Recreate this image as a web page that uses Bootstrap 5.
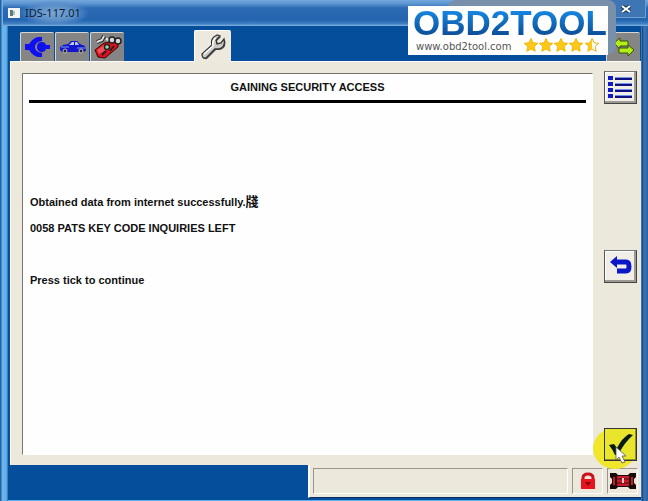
<!DOCTYPE html>
<html lang="en">
<head>
<meta charset="utf-8">
<meta name="viewport" content="width=device-width, initial-scale=1">
<title>IDS-117.01</title>
<link href="https://cdn.jsdelivr.net/npm/bootstrap@5.3.0/dist/css/bootstrap.min.css" rel="stylesheet">
<style>
body{font-family:"Liberation Sans",Arial,sans-serif;font-size:11px;line-height:26px;color:#111;background:#3c78b8}
.app-window{min-height:100vh;padding:0 7px 1px 8px;overflow:hidden;
 background:linear-gradient(90deg,#2a5f9d 0,#2a5f9d 1px,#68b4ee 2px,#62b6f0 6px,#3a6fa8 8px,transparent 8px,transparent calc(100% - 7px),#143f78 calc(100% - 6px),#3c74b4 calc(100% - 4px),#2a62a4 100%),#5cb0ec}
.title-bar{height:26px;margin-left:-5px;margin-right:-7px;padding-left:5px;background:linear-gradient(180deg,#74a8dc 0,#5a93cf 4px,#2c6ab4 8px,#2465b0 20px,#4482c4 24px,#86b8e6 26px)}
.title-text{font-family:"Noto Sans","Open Sans",sans-serif;font-size:11px;color:#0c1c38;padding:0 8px 0 5px;background:radial-gradient(closest-side,#7aa6d4,#5a8fc8 60%,transparent)}
.btn-close-win{width:40px;height:18px;margin-right:2px;border:1px solid #6f9fcf;border-top:0;background:#3d75b5;color:#fff}
.client{background:#044e9b}
.tab-strip{height:35px;padding:0 1px 0 12px}
.tool-tab{width:34px;height:29px;padding:0;margin-right:1px;border:0;border-top:1px solid #d5d5d5;border-left:1px solid #d5d5d5;border-radius:2px 2px 0 0;background:#858585;line-height:0}
.tool-tab.current{width:37px;height:32px;margin-left:69px;margin-bottom:-1px;background:#ede9df;border-color:#fff;position:relative}
.tool-tab.switch{margin:0 0 0 auto}
.panel{margin-left:2px;background:#ece8dc;border-top:1px solid #fff;border-left:1px solid #fff}
.message{margin:11px 11px 10px;background:#fefefe;border:1px solid #fff;border-top-color:#77756f;border-left-color:#77756f;padding:0 6px;font-weight:700}
.message h1{font-size:11px;font-weight:700;line-height:26px;margin:0;border-bottom:3px solid #000}
.message-body{padding:86px 0 0 1px}
.message-body p{margin:0}
.cjk{font-family:"Noto Sans CJK TC","Noto Sans CJK SC",sans-serif;font-size:13px;line-height:1}
.side{margin:9px 4px 4px 0}
.side-btn{width:33px;height:33px;padding:0;line-height:0;background:#f1eee7;border:1px solid #444;border-top-color:#777;border-left-color:#555;box-shadow:inset -2px -2px #9d9a94,inset 1px 1px #fff}
.side-btn.tick{background:#e9e52c;position:relative;border-color:#333;box-shadow:inset -1px -1px #8f8d28}
.halo{position:absolute;left:-11px;right:0;top:0;bottom:-8px;border-radius:50%;background:#f0e72c}
.pointer{position:absolute;left:11px;top:18px;z-index:2}
.bottom{height:35px}
.status{width:333px;height:33px;padding:3px;background:#ece8dc;border-left:2px solid #fff;border-bottom:1px solid #06315f}
.status-cell{border:1px solid #fff;border-top-color:#99958d;border-left-color:#99958d;line-height:0}
.w-cell{width:31px}
.brand-tag{position:absolute;right:40px;top:6px;width:200px;height:49px;background:#fff;z-index:5}
.brand-shade{position:absolute;right:32px;top:0;width:168px;height:54px;border-radius:8px;background:#7890aa;z-index:4}
.brand-name{font-size:35px;font-weight:700;line-height:34px;height:32px;padding-left:5px;background:linear-gradient(#1686e0 5px,#0c4d96 30px);-webkit-background-clip:text;background-clip:text;color:transparent;white-space:nowrap}
.brand-url{font-family:"DejaVu Sans",sans-serif;font-size:10px;line-height:18px;color:#555;text-decoration:none}
</style>
<script src="https://cdn.jsdelivr.net/npm/bootstrap@5.3.0/dist/js/bootstrap.bundle.min.js"></script>
</head>
<body>
<div class="app-window d-flex flex-column position-relative">
 <header class="title-bar d-flex align-items-center">
  <svg width="12" height="10" viewBox="0 0 12 10" aria-hidden="true"><path fill="#f3f5f4" d="M0 0h12v10H0z"/><path fill="#5f7b7c" d="M2 2h3v6H2z"/><path fill="#a9c5ba" d="M5 3h2v4H5z"/></svg>
  <span class="title-text">IDS-117.01</span>
  <button class="btn-close-win ms-auto align-self-start p-0 lh-1" aria-label="Close"><svg width="10" height="8" viewBox="0 0 10 8"><path d="M1 1l8 6M9 1L1 7" stroke="#17375e" stroke-width="4"/><path d="M1 1l8 6M9 1L1 7" stroke="#fff" stroke-width="2"/></svg></button>
 </header>

 <div class="brand-shade"></div>
 <div class="brand-tag">
  <div class="brand-name">OBD2TOOL</div>
  <div class="d-flex align-items-start justify-content-between px-2">
   <a href="#" class="brand-url">www.obd2tool.com</a>
   <svg width="76" height="15" viewBox="0 0 76 15" role="img" aria-label="4.5 stars"><defs><path id="star" d="M7 .5l2 4.300 4.700.5-3.500 3.200 1 4.800L7 11l-4.200 2.300 1-4.800L.3 5.300 5 4.800z"/></defs><g fill="#fbc81a" stroke="#f2b800" stroke-width="1" stroke-linejoin="round"><use href="#star" x="0"/><use href="#star" x="15"/><use href="#star" x="30"/><use href="#star" x="45"/></g><use href="#star" x="61" fill="#fff" stroke="#e8ad10"/><path fill="#fbc81a" d="M68 .5V11l-4.200 2.300 1-4.800-3.500-3.200 4.700-.5z"/></svg>
  </div>
 </div>

 <div class="client d-flex flex-column flex-grow-1">
  <nav class="tab-strip d-flex align-items-end" aria-label="Tools">
    <button class="tool-tab" aria-label="Connection"><svg width="26" height="20" viewBox="0 0 26 20"><path fill="#1010ee" d="M0 7h4Q8 1 13 0h4v4Q10 5 10 10t7 6v4h-4Q8 19 4 13H0z"/><path fill="#1010ee" d="M12 10q0-5 5-5 3 0 4 3h4v4h-4q-1 3-4 3-5 0-5-5z"/></svg></button>
    <button class="tool-tab" aria-label="Vehicle"><svg width="28" height="14" viewBox="0 0 28 14"><path fill="#1515cc" d="M1 7l3-2 5-1 3-3h6l3 3 5 2 1 5-3 1H3L1 10z"/><path fill="#b9c8ef" d="M10 5l3-3h2v3zm6-3h2l2 3h-4z"/><path stroke="#78a0f0" d="M2 7h8m8 1h8" fill="none"/><g fill="#222" stroke="#bbb"><circle cx="6" cy="11" r="2"/><circle cx="22" cy="11" r="2"/></g></svg></button>
    <button class="tool-tab" aria-label="Toolbox"><svg width="28" height="24" viewBox="0 0 28 24"><path fill="#d9131d" stroke="#400" d="M1 15l9-7 14-2v6L11 23l-7-1z"/><path fill="#f05058" d="M3 15l7-5 2 5-7 4z"/><path fill="none" stroke="#222" stroke-width="4" d="M3 7l5-2 2-4"/><path fill="none" stroke="#ddd" stroke-width="2" d="M3 7l5-2 2-4"/><path stroke="#eee" stroke-width="2" d="M12 4l6 2"/><g fill="#d8d8d8" stroke="#222" stroke-width="1.500"><circle cx="18" cy="5" r="3"/><circle cx="24" cy="6" r="3"/><circle cx="13" cy="12" r="2.500" fill="#a5d3a6"/></g><path stroke="#222" stroke-width="2" d="M8 20l4-4m4 0l4-5"/></svg></button>
    <button class="tool-tab current" aria-label="Service"><svg width="26" height="26" viewBox="0 0 26 26"><path transform="translate(1 1)" fill="#555" d="M2 20L12 11Q10 4 17 1l3 1-4 4 1 4 4-1 3-4q2 8-5 10l-4 0L6 24Q2 25 2 20z"/><path fill="#c9c9c7" stroke="#343434" stroke-width="1.300" d="M2 20L12 11Q10 4 17 1l3 1-4 4 1 4 4-1 3-4q2 8-5 10l-4 0L6 24Q2 25 2 20z"/><path fill="none" stroke="#fff" stroke-width="1.500" d="M4 20l9-8q-1-6 3-8"/></svg></button>
    <button class="tool-tab switch" aria-label="Switch"><svg width="22" height="20" viewBox="0 0 22 20"><g fill="#b5ee16" stroke="#34500b"><path d="M1 6l6-5v3h8v5H7v3z"/><path d="M21 13l-6-5v3H6v5h9v3z"/></g></svg></button>
  </nav>

  <main class="panel d-flex flex-grow-1">
   <section class="message flex-grow-1">
    <h1 class="text-center">GAINING SECURITY ACCESS</h1>
    <div class="message-body">
     <p>Obtained data from internet successfully.<span class="cjk">牋</span></p>
     <p>0058 PATS KEY CODE INQUIRIES LEFT</p>
     <p>&nbsp;</p>
     <p>Press tick to continue</p>
    </div>
   </section>
   <aside class="side d-flex flex-column justify-content-between">
    <button class="side-btn" aria-label="Menu"><svg width="25" height="25" viewBox="0 0 25 25"><path d="M0 1h5v4H0zM0 7h5v4H0zM0 13h5v4H0zM0 19h5v4H0z" fill="#1118c8"/><path d="M7 4h17M7 10h17M7 16h17M7 22h17" stroke="#101080" stroke-width="2"/><path d="M7 2.500h17M7 8.500h17M7 14.500h17M7 20.500h17" stroke="#6f94e8"/></svg></button>
    <button class="side-btn" aria-label="Back"><svg width="24" height="22" viewBox="0 0 24 22"><path d="M6 7h11q3 0 3 4.500T17 16H8" fill="none" stroke="#0b18c8" stroke-width="5"/><path fill="#0b18c8" d="M1 7l7-6v12z"/></svg></button>
    <div class="position-relative">
     <div class="halo"></div>
     <button class="side-btn tick" aria-label="Continue"><svg width="27" height="26" viewBox="0 0 27 26"><path fill="#071b12" d="M2 13l5-1 3 4Q15 6 22 2l4 1Q17 11 11 23H8Q6 18 2 13z"/></svg></button>
     <svg class="pointer" width="14" height="20" viewBox="0 0 14 20" aria-hidden="true"><path fill="#fff" stroke="#555" stroke-width=".8" d="M1 1v13l3-3 3 6 3-1-3-6h4z"/></svg>
    </div>
   </aside>
  </main>

  <footer class="bottom d-flex justify-content-end">
   <div class="status d-flex gap-1">
    <div class="status-cell flex-grow-1"></div>
    <div class="status-cell w-cell d-flex align-items-center justify-content-center"><svg width="16" height="18" viewBox="0 0 16 18" role="img" aria-label="Locked"><path d="M3 9V6q0-4 5-4t5 4v3" fill="none" stroke="#c9141c" stroke-width="3"/><path fill="#e5141d" d="M1 7h14v10H1z"/><path fill="#7c0a10" d="M5 10h6l-3 4z"/></svg></div>
    <div class="status-cell w-cell d-flex align-items-center justify-content-center"><svg width="26" height="18" viewBox="0 0 26 18" role="img" aria-label="Module"><path fill="#18090a" d="M0 1h6l2 2h10l2-2h6v4l-2 2v4l2 2v4h-6l-2-2H8l-2 2H0v-4l2-2V7L0 5z"/><path fill="#c81c28" d="M7 4h12v10H7zM3 5h2v8H3zM21 5h2v8h-2z"/><path stroke="#550b10" d="M7 7h12M7 11h12"/><path fill="#f3c8c8" d="M12 6h2v5h-2z"/></svg></div>
   </div>
  </footer>
 </div>
</div>
</body>
</html>
